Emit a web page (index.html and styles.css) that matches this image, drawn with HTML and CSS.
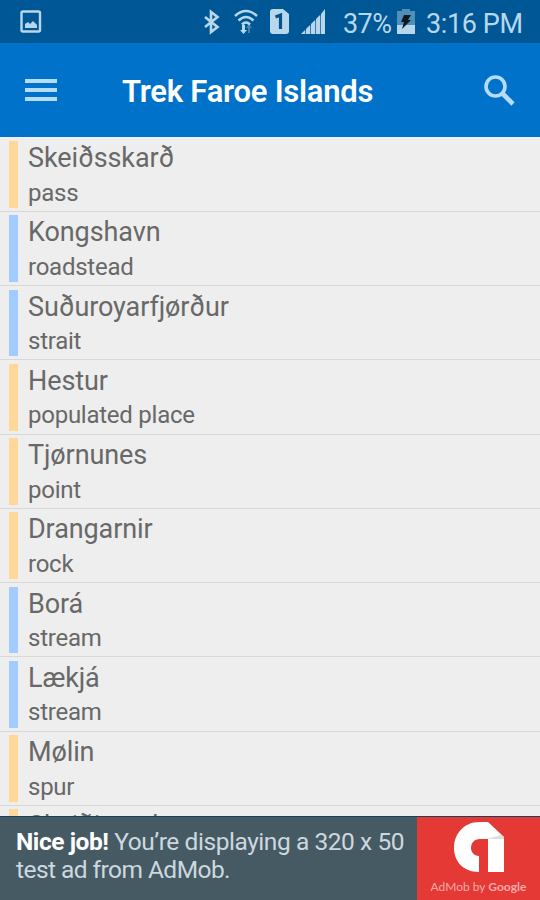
FILE: index.html
```html
<!DOCTYPE html>
<html lang="en">
<head>
<meta charset="utf-8">
<title>Trek Faroe Islands</title>
<link rel="stylesheet" href="styles.css">
</head>
<body>
<div class="screen">
  <div class="status">
    <svg class="picture" width="22" height="24" viewBox="0 0 22 24"><rect x="1.5" y="1.5" width="18.5" height="20" rx="1.5" fill="none" stroke="currentColor" stroke-width="2.4"/><path d="M5 18v-4l3-2 2 2 3-3 4 4v3z" fill="currentColor"/></svg>
    <svg class="bluetooth" width="18" height="26" viewBox="0 0 18 26"><path d="M2 8l12.500 10-6.500 5V3l6.500 5L2 18" fill="none" stroke="currentColor" stroke-width="2.6"/></svg>
    <svg class="wifi" width="26" height="28" viewBox="0 0 26 28"><path d="M2 8q11-10 22 0M5.500 12.500q7.500-7 15 0M9 16.500q4-4 8 0" fill="none" stroke="currentColor" stroke-width="2.5"/><path d="M9 17h3v5h2l-3.500 4L7 22h2z" fill="currentColor"/><path d="M15 25v-5h-2l3-4 3 4h-2v5z" fill="currentColor" opacity=".35"/></svg>
    <svg class="sim" width="19" height="25" viewBox="0 0 19 25"><path d="M3 0h10l6 5v17q0 3-3 3H3q-3 0-3-3V3q0-3 3-3z" fill="currentColor"/><path d="M5.500 8l5-2v14" fill="none" stroke="#07518c" stroke-width="3.200"/></svg>
    <svg class="signal" width="25" height="25" viewBox="0 0 25 25"><path d="M0 25l4-4v4zM5 20l4-4v9H5zM10 15l4-4v14h-4zM15 10l4-4v19h-4zM20 5l4-5v25h-4z" fill="currentColor"/><path d="M1 25L24 2v23z" fill="currentColor" opacity=".3"/></svg>
    <span class="percent">37%</span>
    <svg class="battery" width="18" height="25" viewBox="0 0 18 25"><path d="M5 0h8v2h5v23H0V2h5z" fill="#4f8fba"/><path d="M0 16h18v9H0z" fill="currentColor"/><path d="M7 6h7l-3 5h3L5 20l2-7H4z" fill="#101820"/></svg>
    <span class="clock">3:16 PM</span>
  </div>
  <header class="bar">
    <svg class="menu" width="32" height="24" viewBox="0 0 32 24"><path d="M0 3h32M0 12h32M0 21h32" stroke="currentColor" stroke-width="3.800"/></svg>
    <h1>Trek Faroe Islands</h1>
    <svg class="search" width="31" height="31" viewBox="0 0 31 31"><circle cx="11.500" cy="11.500" r="9.500" fill="none" stroke="currentColor" stroke-width="3.600"/><path d="M18 18l11 11" stroke="currentColor" stroke-width="4.600"/></svg>
  </header>
  <main class="list">
    <div class="row land"><b>Skeiðsskarð</b><span>pass</span></div>
    <div class="row water"><b>Kongshavn</b><span>roadstead</span></div>
    <div class="row water"><b>Suðuroyarfjørður</b><span>strait</span></div>
    <div class="row land"><b>Hestur</b><span>populated place</span></div>
    <div class="row land"><b>Tjørnunes</b><span>point</span></div>
    <div class="row land"><b>Drangarnir</b><span>rock</span></div>
    <div class="row water"><b>Borá</b><span>stream</span></div>
    <div class="row water"><b>Lækjá</b><span>stream</span></div>
    <div class="row land"><b>Mølin</b><span>spur</span></div>
    <div class="row land"><b>Skeiðisand</b></div>
  </main>
  <footer class="ad">
    <p><span class="lead"><strong>Nice job!</strong> You’re displaying a 320 x 50</span><br>test ad from AdMob.</p>
    <div class="brand">
      <svg width="52" height="51" viewBox="0 0 52 51"><path d="M26 50C10 50 1 39 1 26 1 11 12 0 26 0h9l16 15v35H35V17H27c-6 0-9 4-9 9 0 4 3 8 8 8z" fill="#fff"/><path d="M33 17h18v-2l-3-2z" fill="#dedede"/></svg>
      <small>AdMob by <em>Google</em></small>
    </div>
  </footer>
</div>
</body>
</html>
```
FILE: styles.css
```css
* { box-sizing: border-box; }
body { margin: 0; font-family: Roboto, "Liberation Sans", sans-serif; }
.screen { width: 540px; height: 900px; display: flex; flex-direction: column; overflow: hidden; background: #eee; }
.status { height: 43px; flex: none; display: flex; align-items: center; background: #005796; color: #b9d7ec; padding-left: 20px; font-size: 27px; white-space: nowrap; }
.status svg { flex: none; }
.bluetooth { margin-left: 161px; }
.wifi { margin-left: 12px; }
.sim { margin-left: 11px; }
.signal { margin-left: 12px; }
.percent { width: 48px; margin: 4px 0 0 17px; letter-spacing: -.6px; }
.battery { margin-left: 6px; }
.clock { margin: 4px 0 0 11px; letter-spacing: -.4px; }
.bar { height: 94px; flex: none; display: flex; align-items: center; background: #0072c9; padding-left: 25px; color: #b5dcfa; }
.bar h1 { width: 252px; margin: 3px 0 0 65px; font-size: 31px; font-weight: 600; color: #fff; white-space: nowrap; letter-spacing: -.25px; }
.search { margin-left: 110px; }
.list { height: 679px; flex: none; overflow: hidden; padding-top: .5px; }
.row { height: 74.25px; padding: 3.5px 0 3px 9px; border-bottom: 1.5px solid #d8d8d8; display: grid; grid-template-columns: 9px 1fr; grid-template-rows: 34.5px 32.25px; column-gap: 10px; color: #686868; }
.row::before { content: ""; grid-row: 1 / 3; background: #ffd798; }
.row.water::before { background: #a2cbff; }
.row b { font-size: 27px; line-height: 34.500px; font-weight: 400; letter-spacing: -.1px; }
.row span { font-size: 24px; line-height: 35px; grid-column: 2; letter-spacing: -.25px; }
.ad { flex: 1; display: flex; background: #465a64; border-top: 1px solid #15435e; color: #ccd8df; }
.ad p { width: 417px; flex: none; margin: 0; padding: 11px 0 0 16px; font-size: 24.5px; letter-spacing: -.55px; line-height: 28px; white-space: nowrap; }
.ad .lead { letter-spacing: -.44px; }
.ad strong { color: #fff; }
.brand { flex: 1; background: #e53935; display: flex; flex-direction: column; align-items: center; padding-top: 5px; }
.brand small { margin-top: 6px; font: 12px/16px Lato, sans-serif; color: #f6aaa8; white-space: nowrap; }
.brand em { font-style: normal; font-weight: 700; }
```
